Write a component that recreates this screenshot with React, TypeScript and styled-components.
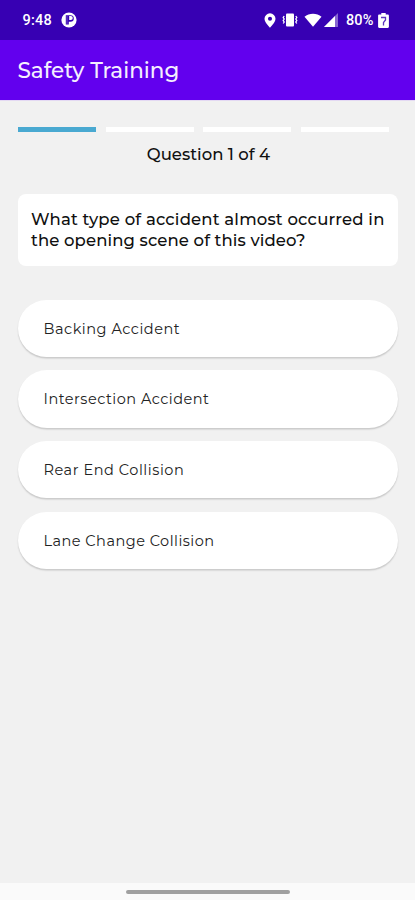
import React from "react";
import styled, { createGlobalStyle } from "styled-components";

const GlobalStyle = createGlobalStyle`
  * { box-sizing: border-box; }
  body { margin: 0; background: #f1f1f1; }
`;

const Screen = styled.div`
  width: 100%;
  height: 900px;
  display: flex;
  flex-direction: column;
  background: #f1f1f1;
  font-family: Montserrat, Inter, sans-serif;
  color: #101010;
`;

const StatusBar = styled.div`
  height: 40px;
  flex: none;
  display: flex;
  align-items: center;
  padding: 0 26px 0 22.5px;
  background: #3700b3;
  color: #fff;
  font: 500 14.5px/20px Roboto, sans-serif;
  svg { display: block; flex: none; }
`;

const Clock = styled.span`
  width: 38px;
  padding-top: 1px;
  letter-spacing: 0.2px;
`;

const StatusIcons = styled.div`
  margin-left: auto;
  display: flex;
  align-items: center;
`;

const BatteryLevel = styled.span`
  width: 32px;
  padding-top: 1px;
  white-space: nowrap;
  margin-left: 8px;
  letter-spacing: 0.1px;
`;

const AppBar = styled.header`
  height: 60px;
  flex: none;
  display: flex;
  align-items: center;
  padding-left: 17.5px;
  background: #6200ee;
  box-shadow: 0 1px 0 #e4d9f3;
`;

const Title = styled.h1`
  margin: 0;
  color: #f5efff;
  font-size: 21.5px;
  font-weight: 500;
  line-height: 28px;
  white-space: nowrap;
`;

const Content = styled.main`
  flex: 1;
  padding: 27px 17px 0 18px;
`;

const Progress = styled.div`
  display: grid;
  grid-template-columns: 78px 88px 88px 88px;
  column-gap: 9.7px;
`;

const Segment = styled.div<{ $active?: boolean }>`
  height: 5px;
  background: ${(p) => (p.$active ? "#49a9d1" : "#fff")};
`;

const Counter = styled.div`
  margin: 11px 0 29px;
  padding-left: 1px;
  text-align: center;
  font-size: 16.5px;
  font-weight: 500;
  line-height: 22px;
`;

const QuestionCard = styled.section`
  height: 72px;
  padding: 15px 13px;
  border-radius: 8px;
  background: #fff;
  font-size: 16.5px;
  font-weight: 500;
  line-height: 21px;
`;

const Line = styled.span<{ $spacing: number }>`
  display: block;
  white-space: nowrap;
  letter-spacing: ${(p) => p.$spacing}px;
`;

const Options = styled.div`
  margin-top: 33.5px;
  display: grid;
  row-gap: 13.2px;
`;

const Option = styled.button<{ $spacing: number }>`
  height: 57.5px;
  border: 0;
  border-radius: 29px;
  padding: 1px 26px 0 25.5px;
  background: #fff;
  box-shadow: 0 1.5px 1.5px rgba(0, 0, 0, 0.17);
  color: #222;
  font: 400 14.5px/20px Montserrat, Inter, sans-serif;
  letter-spacing: ${(p) => p.$spacing}px;
  text-align: left;
`;

const NavBar = styled.footer`
  height: 17px;
  flex: none;
  display: flex;
  justify-content: center;
  padding-top: 7px;
  background: #fafafa;
`;

const Handle = styled.div`
  width: 164px;
  height: 4px;
  border-radius: 2px;
  background: #a0a0a0;
`;

const AppBadge = () => (
  <svg width="16" height="16" viewBox="0 0 16 16">
    <circle cx="8" cy="8" r="7.6" fill="#fff" />
    <path d="M4.800 3.200v9.400h3V9.800h1.700a3.300 3.300 0 0 0 0-6.600z" fill="#3700b3" />
    <path d="M8.200 4v4h1.600a2 2 0 0 0 0-4z" fill="#fff" />
    <path d="M6 4v8" stroke="#8e70d5" strokeWidth=".7" />
  </svg>
);

const Pin = () => (
  <svg width="12" height="15" viewBox="0 0 12 15">
    <path
      fillRule="evenodd"
      fill="#fff"
      d="M6 .3A5.500 5.500 0 0 0 .5 5.800C.5 9.500 6 14.700 6 14.700s5.500-5.200 5.500-8.900A5.500 5.500 0 0 0 6 .3zM6 3.700a2 2 0 1 1 0 4.100 2 2 0 0 1 0-4.100z"
    />
  </svg>
);

const Vibrate = () => (
  <svg width="16" height="14" viewBox="0 0 16 14">
    <rect x="4" y=".5" width="8" height="13" rx="1" fill="#fff" />
    <path
      d="M2.200 3l-1 1.500 1 1.500-1 1.500 1 1.500-1 1.500M13.800 3l1 1.500-1 1.500 1 1.500-1 1.500 1 1.500"
      fill="none"
      stroke="#fff"
      strokeWidth="1.300"
    />
  </svg>
);

const Wifi = () => (
  <svg width="18" height="14" viewBox="0 0 18 14">
    <path d="M.5 3.800C5-.3 13-.3 17.500 3.800L9 13.800z" fill="#fff" />
  </svg>
);

const Signal = () => (
  <svg width="14" height="14" viewBox="0 0 14 14">
    <path d="M14 0v14H0z" fill="#fff" opacity=".4" />
    <path d="M11 3V14H0z" fill="#fff" />
  </svg>
);

const Battery = () => (
  <svg width="11" height="15" viewBox="0 0 11 15">
    <path
      d="M3.300 0h4.400v1.400h2c.7 0 1.200.5 1.200 1.200v11.200c0 .7-.5 1.200-1.200 1.200H1.300C.6 15 .1 14.500.1 13.800V2.600c0-.7.5-1.200 1.200-1.200h2z"
      fill="#fff"
    />
    <path d="M3 4.500h4.500v2.500L5.500 9.500v3" fill="none" stroke="#5d35bf" strokeWidth="1.300" />
  </svg>
);

const SEGMENTS = [true, false, false, false];

const OPTIONS = [
  { label: "Backing Accident", spacing: 0.53 },
  { label: "Intersection Accident", spacing: 0.5 },
  { label: "Rear End Collision", spacing: 0.55 },
  { label: "Lane Change Collision", spacing: 0.48 },
];

const Gap = styled.span<{ $w: number }>`
  width: ${(p) => p.$w}px;
`;

export default function App() {
  return (
    <>
      <GlobalStyle />
      <Screen>
        <StatusBar>
          <Clock>9:48</Clock>
          <AppBadge />
          <StatusIcons>
            <Pin />
            <Gap $w={6} />
            <Vibrate />
            <Gap $w={6} />
            <Wifi />
            <Gap $w={2} />
            <Signal />
            <BatteryLevel>80%</BatteryLevel>
            <Battery />
          </StatusIcons>
        </StatusBar>
        <AppBar>
          <Title>Safety Training</Title>
        </AppBar>
        <Content>
          <Progress>
            {SEGMENTS.map((active, i) => (
              <Segment key={i} $active={active} />
            ))}
          </Progress>
          <Counter>Question 1 of 4</Counter>
          <QuestionCard>
            <Line $spacing={0.17}>What type of accident almost occurred in</Line>
            <Line $spacing={0.1}>the opening scene of this video?</Line>
          </QuestionCard>
          <Options>
            {OPTIONS.map((o) => (
              <Option key={o.label} $spacing={o.spacing}>
                {o.label}
              </Option>
            ))}
          </Options>
        </Content>
        <NavBar>
          <Handle />
        </NavBar>
      </Screen>
    </>
  );
}
